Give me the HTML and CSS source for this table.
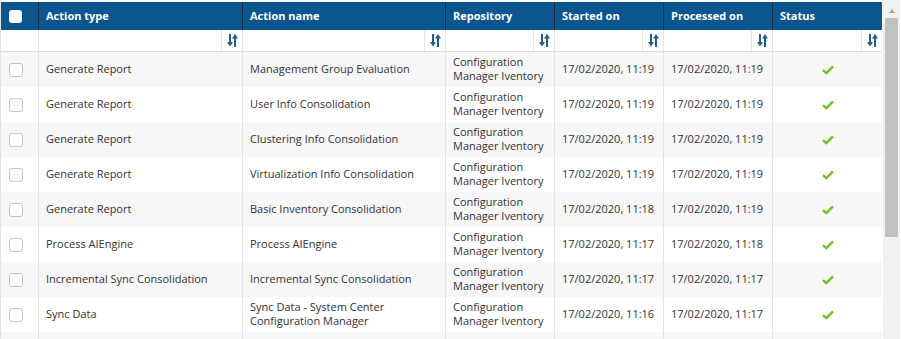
FILE: index.html
```html
<!DOCTYPE html>
<html lang="en">
<head>
<meta charset="utf-8">
<title>Actions</title>
<link rel="stylesheet" href="styles.css">
</head>
<body>
<div class="frame">
  <div class="grid">
    <div class="row head">
      <div class="cell chk-cell"><span class="box box-head"></span></div>
      <div class="cell">Action type</div>
      <div class="cell">Action name</div>
      <div class="cell">Repository</div>
      <div class="cell">Started on</div>
      <div class="cell">Processed on</div>
      <div class="cell">Status</div>
    </div>
    <div class="row filter">
      <div class="cell"></div>
      <div class="cell"><span class="fill"></span><span class="sort"><svg width="11" height="13" viewBox="0 0 11 13"><rect x="2" y="0" width="2" height="9"/><path d="M0 8h6l-3 4.5z"/><rect x="7" y="4" width="2" height="9"/><path d="M5 4.5h6L8 0z"/></svg></span></div>
      <div class="cell"><span class="fill"></span><span class="sort"><svg width="11" height="13" viewBox="0 0 11 13"><rect x="2" y="0" width="2" height="9"/><path d="M0 8h6l-3 4.5z"/><rect x="7" y="4" width="2" height="9"/><path d="M5 4.5h6L8 0z"/></svg></span></div>
      <div class="cell"><span class="fill"></span><span class="sort"><svg width="11" height="13" viewBox="0 0 11 13"><rect x="2" y="0" width="2" height="9"/><path d="M0 8h6l-3 4.5z"/><rect x="7" y="4" width="2" height="9"/><path d="M5 4.5h6L8 0z"/></svg></span></div>
      <div class="cell"><span class="fill"></span><span class="sort"><svg width="11" height="13" viewBox="0 0 11 13"><rect x="2" y="0" width="2" height="9"/><path d="M0 8h6l-3 4.5z"/><rect x="7" y="4" width="2" height="9"/><path d="M5 4.5h6L8 0z"/></svg></span></div>
      <div class="cell"><span class="fill"></span><span class="sort"><svg width="11" height="13" viewBox="0 0 11 13"><rect x="2" y="0" width="2" height="9"/><path d="M0 8h6l-3 4.5z"/><rect x="7" y="4" width="2" height="9"/><path d="M5 4.5h6L8 0z"/></svg></span></div>
      <div class="cell"><span class="fill"></span><span class="sort"><svg width="11" height="13" viewBox="0 0 11 13"><rect x="2" y="0" width="2" height="9"/><path d="M0 8h6l-3 4.5z"/><rect x="7" y="4" width="2" height="9"/><path d="M5 4.5h6L8 0z"/></svg></span></div>
    </div>

    <div class="row body odd">
      <div class="cell chk-cell"><span class="box"></span></div>
      <div class="cell">Generate Report</div>
      <div class="cell">Management Group Evaluation</div>
      <div class="cell">Configuration<br>Manager Iventory</div>
      <div class="cell">17/02/2020, 11:19</div>
      <div class="cell">17/02/2020, 11:19</div>
      <div class="cell status"><svg width="12" height="10" viewBox="0 0 12 10"><path d="M1 5.2l3.3 3L11 1.3" fill="none" stroke="#72c21f" stroke-width="2.4"/></svg></div>
    </div>
    <div class="row body">
      <div class="cell chk-cell"><span class="box"></span></div>
      <div class="cell">Generate Report</div>
      <div class="cell">User Info Consolidation</div>
      <div class="cell">Configuration<br>Manager Iventory</div>
      <div class="cell">17/02/2020, 11:19</div>
      <div class="cell">17/02/2020, 11:19</div>
      <div class="cell status"><svg width="12" height="10" viewBox="0 0 12 10"><path d="M1 5.2l3.3 3L11 1.3" fill="none" stroke="#72c21f" stroke-width="2.4"/></svg></div>
    </div>
    <div class="row body odd">
      <div class="cell chk-cell"><span class="box"></span></div>
      <div class="cell">Generate Report</div>
      <div class="cell">Clustering Info Consolidation</div>
      <div class="cell">Configuration<br>Manager Iventory</div>
      <div class="cell">17/02/2020, 11:19</div>
      <div class="cell">17/02/2020, 11:19</div>
      <div class="cell status"><svg width="12" height="10" viewBox="0 0 12 10"><path d="M1 5.2l3.3 3L11 1.3" fill="none" stroke="#72c21f" stroke-width="2.4"/></svg></div>
    </div>
    <div class="row body">
      <div class="cell chk-cell"><span class="box"></span></div>
      <div class="cell">Generate Report</div>
      <div class="cell">Virtualization Info Consolidation</div>
      <div class="cell">Configuration<br>Manager Iventory</div>
      <div class="cell">17/02/2020, 11:19</div>
      <div class="cell">17/02/2020, 11:19</div>
      <div class="cell status"><svg width="12" height="10" viewBox="0 0 12 10"><path d="M1 5.2l3.3 3L11 1.3" fill="none" stroke="#72c21f" stroke-width="2.4"/></svg></div>
    </div>
    <div class="row body odd">
      <div class="cell chk-cell"><span class="box"></span></div>
      <div class="cell">Generate Report</div>
      <div class="cell">Basic Inventory Consolidation</div>
      <div class="cell">Configuration<br>Manager Iventory</div>
      <div class="cell">17/02/2020, 11:18</div>
      <div class="cell">17/02/2020, 11:19</div>
      <div class="cell status"><svg width="12" height="10" viewBox="0 0 12 10"><path d="M1 5.2l3.3 3L11 1.3" fill="none" stroke="#72c21f" stroke-width="2.4"/></svg></div>
    </div>
    <div class="row body">
      <div class="cell chk-cell"><span class="box"></span></div>
      <div class="cell">Process AIEngine</div>
      <div class="cell">Process AIEngine</div>
      <div class="cell">Configuration<br>Manager Iventory</div>
      <div class="cell">17/02/2020, 11:17</div>
      <div class="cell">17/02/2020, 11:18</div>
      <div class="cell status"><svg width="12" height="10" viewBox="0 0 12 10"><path d="M1 5.2l3.3 3L11 1.3" fill="none" stroke="#72c21f" stroke-width="2.4"/></svg></div>
    </div>
    <div class="row body odd">
      <div class="cell chk-cell"><span class="box"></span></div>
      <div class="cell">Incremental Sync Consolidation</div>
      <div class="cell">Incremental Sync Consolidation</div>
      <div class="cell">Configuration<br>Manager Iventory</div>
      <div class="cell">17/02/2020, 11:17</div>
      <div class="cell">17/02/2020, 11:17</div>
      <div class="cell status"><svg width="12" height="10" viewBox="0 0 12 10"><path d="M1 5.2l3.3 3L11 1.3" fill="none" stroke="#72c21f" stroke-width="2.4"/></svg></div>
    </div>
    <div class="row body">
      <div class="cell chk-cell"><span class="box"></span></div>
      <div class="cell">Sync Data</div>
      <div class="cell">Sync Data - System Center<br>Configuration Manager</div>
      <div class="cell">Configuration<br>Manager Iventory</div>
      <div class="cell">17/02/2020, 11:16</div>
      <div class="cell">17/02/2020, 11:17</div>
      <div class="cell status"><svg width="12" height="10" viewBox="0 0 12 10"><path d="M1 5.2l3.3 3L11 1.3" fill="none" stroke="#72c21f" stroke-width="2.4"/></svg></div>
    </div>
    <div class="row body odd short">
      <div class="cell chk-cell"></div>
      <div class="cell"></div>
      <div class="cell"></div>
      <div class="cell"></div>
      <div class="cell"></div>
      <div class="cell"></div>
      <div class="cell"></div>
    </div>
  </div>
  <div class="scrollbar">
    <span class="arrow"></span>
    <span class="thumb"></span>
  </div>
</div>
</body>
</html>
```

FILE: styles.css
```css
html, body {
  margin: 0;
  padding: 0;
  background: #ffffff;
  overflow: hidden;
}
body {
  font-family: "Open Sans", "Noto Sans", sans-serif;
  font-size: 11px;
  color: #333333;
}
.frame {
  display: flex;
  padding-top: 2px;
  height: 337px;
  overflow: hidden;
}
.grid {
  width: 882px;
  flex: none;
  border-left: 1px solid #e3e3e3;
  box-sizing: border-box;
}
.row {
  display: grid;
  grid-template-columns: 37px 204px 203px 109px 109px 109px 110px;
}
.cell {
  box-sizing: border-box;
  display: flex;
  align-items: center;
  padding-left: 7px;
  border-left: 1px solid #e4e4e4;
  min-width: 0;
}
.cell:first-child {
  border-left: none;
  padding-left: 8px;
}
.head {
  height: 28px;
  background: #0b568f;
  color: #ffffff;
  font-weight: 700;
  font-size: 11px;
}
.head .cell {
  border-left-color: #1b2d40;
  padding-bottom: 2px;
}
.head .cell:first-child {
  padding-bottom: 0;
}
.filter {
  height: 22px;
  border-bottom: 1px solid #dddddd;
  box-sizing: border-box;
  background: #ffffff;
}
.filter .cell {
  padding-left: 0;
  align-items: stretch;
}
.fill {
  flex: 1;
}
.sort {
  width: 20px;
  flex: none;
  border-left: 1px solid #e6e6e6;
  display: flex;
  align-items: center;
  justify-content: center;
}
.sort svg {
  fill: #1f5c94;
}
.body {
  height: 35px;
  line-height: 14px;
  background: #ffffff;
}
.body .cell {
  padding-bottom: 2px;
}
.body .cell.chk-cell,
.body .cell.status {
  padding-bottom: 0;
}
.body.odd {
  background: #f7f7f7;
}
.body.short {
  height: 8px;
}
.box {
  display: block;
  width: 12px;
  height: 12px;
  border: 1px solid #c6c6c6;
  border-radius: 3px;
  background: #ffffff;
}
.box-head {
  width: 13px;
  height: 13px;
  border: none;
  margin-top: 1px;
}
.status {
  justify-content: center;
  padding-left: 0;
}
.scrollbar {
  width: 17px;
  flex: none;
  background: #f1f1f1;
  margin-left: 1px;
  margin-top: -2px;
  display: flex;
  flex-direction: column;
  align-items: center;
}
.arrow {
  margin-top: 9px;
  width: 0;
  height: 0;
  border-left: 3.5px solid transparent;
  border-right: 3.5px solid transparent;
  border-bottom: 4px solid #a3a3a3;
}
.thumb {
  margin-top: 5px;
  width: 13px;
  height: 219px;
  background: #c1c1c1;
}
```
